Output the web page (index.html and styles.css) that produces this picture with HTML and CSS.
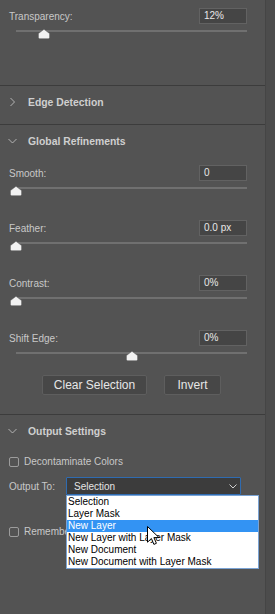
FILE: index.html
```html
<!DOCTYPE html>
<html>
<head>
<meta charset="utf-8">
<link rel="stylesheet" href="styles.css">
</head>
<body>
<div class="app">
  <div class="panel">
    <section class="sec sec-top">
      <div class="field">
        <div class="row"><span class="label">Transparency:</span><span class="box">12%</span></div>
        <div class="slider"><div class="track"></div><svg class="thumb" style="left:12%" width="12" height="10" viewBox="0 0 12 10"><path d="M6 0.3 L11.6 4.6 V8.6 Q11.6 9.7 10.5 9.7 H1.5 Q0.4 9.7 0.4 8.6 V4.6 Z"/></svg></div>
      </div>
    </section>

    <section class="sec sec-collapsed">
      <div class="header">
        <svg class="chev" width="9" height="10" viewBox="0 0 9 10"><polyline points="2.5,1 6.5,5 2.5,9"/></svg>
        <span class="htext">Edge Detection</span>
      </div>
    </section>

    <section class="sec sec-global">
      <div class="header">
        <svg class="chev" width="9" height="10" viewBox="0 0 9 10"><polyline points="0.5,3 4.5,7 8.5,3"/></svg>
        <span class="htext">Global Refinements</span>
      </div>
      <div class="fields">
        <div class="field">
          <div class="row"><span class="label">Smooth:</span><span class="box">0</span></div>
          <div class="slider"><div class="track"></div><svg class="thumb" style="left:0%" width="12" height="10" viewBox="0 0 12 10"><path d="M6 0.3 L11.6 4.6 V8.6 Q11.6 9.7 10.5 9.7 H1.5 Q0.4 9.7 0.4 8.6 V4.6 Z"/></svg></div>
        </div>
        <div class="field">
          <div class="row"><span class="label">Feather:</span><span class="box">0.0 px</span></div>
          <div class="slider"><div class="track"></div><svg class="thumb" style="left:0%" width="12" height="10" viewBox="0 0 12 10"><path d="M6 0.3 L11.6 4.6 V8.6 Q11.6 9.7 10.5 9.7 H1.5 Q0.4 9.7 0.4 8.6 V4.6 Z"/></svg></div>
        </div>
        <div class="field">
          <div class="row"><span class="label">Contrast:</span><span class="box">0%</span></div>
          <div class="slider"><div class="track"></div><svg class="thumb" style="left:0%" width="12" height="10" viewBox="0 0 12 10"><path d="M6 0.3 L11.6 4.6 V8.6 Q11.6 9.7 10.5 9.7 H1.5 Q0.4 9.7 0.4 8.6 V4.6 Z"/></svg></div>
        </div>
        <div class="field">
          <div class="row"><span class="label">Shift Edge:</span><span class="box">0%</span></div>
          <div class="slider"><div class="track"></div><svg class="thumb" style="left:50%" width="12" height="10" viewBox="0 0 12 10"><path d="M6 0.3 L11.6 4.6 V8.6 Q11.6 9.7 10.5 9.7 H1.5 Q0.4 9.7 0.4 8.6 V4.6 Z"/></svg></div>
        </div>
      </div>
      <div class="buttons">
        <button class="btn btn-clear">Clear Selection</button>
        <button class="btn btn-invert">Invert</button>
      </div>
    </section>

    <section class="sec sec-output">
      <div class="header">
        <svg class="chev" width="9" height="10" viewBox="0 0 9 10"><polyline points="0.5,3 4.5,7 8.5,3"/></svg>
        <span class="htext">Output Settings</span>
      </div>
      <div class="check-row check-decon">
        <span class="checkbox"></span><span class="label">Decontaminate Colors</span>
      </div>
      <div class="output-row">
        <span class="label">Output To:</span>
        <div class="select">
          <span class="select-text">Selection</span>
          <svg class="select-chev" width="8" height="5" viewBox="0 0 8 5"><polyline points="0.5,0.5 4,4 7.5,0.5"/></svg>
          <ul class="list">
            <li>Selection</li>
            <li>Layer Mask</li>
            <li class="active">New Layer</li>
            <li>New Layer with Layer Mask</li>
            <li>New Document</li>
            <li>New Document with Layer Mask</li>
            <svg class="cursor" width="13" height="20" viewBox="0 0 13 20"><path d="M0.5 0.5 V16.2 L4.4 12.5 L6.9 18.4 L9.4 17.3 L6.9 11.6 H12 Z"/></svg>
          </ul>
        </div>
      </div>
      <div class="check-row check-remember">
        <span class="checkbox"></span><span class="label">Remember Settings</span>
      </div>
    </section>
  </div>
  <div class="strip"></div>
</div>
</body>
</html>
```

FILE: styles.css
```css
* { box-sizing: border-box; }
html, body { margin: 0; padding: 0; }
body {
  background: #535353;
  font-family: "Liberation Sans", Arial, sans-serif;
  color: #c8c8c8;
  width: 275px;
  height: 614px;
  overflow: hidden;
}
.app { display: flex; height: 614px; }
.panel { width: 265px; background: #535353; }
.strip { width: 10px; background: #4c4c4c; border-left: 1px solid #454545; }

.sec { border-bottom: 1px solid #3c3c3c; }
.sec-top { height: 86px; padding: 8px 18px 0 9px; }
.sec-collapsed { padding-bottom: 6px; }
.sec-global { padding: 0 18px 19px 9px; }
.sec-global .header { margin-left: -9px; }
.sec-output { border-bottom: none; padding: 0 18px 0 9px; }
.sec-output .header { margin-left: -9px; }

.header {
  height: 32px;
  display: flex;
  align-items: center;
  padding-left: 8px;
}
.chev { fill: none; stroke: #b4b4b4; stroke-width: 1; }
.htext {
  margin-left: 11px;
  font-weight: bold;
  font-size: 10.4px;
  color: #cfcfcf;
}

.label { font-size: 10px; color: #c8c8c8; }
.fields { display: flex; flex-direction: column; gap: 10px; margin-top: 8px; }
.field { height: 45px; }
.row { display: flex; justify-content: space-between; align-items: center; height: 16px; }
.box {
  width: 48px;
  height: 16px;
  background: #454545;
  border: 1px solid #626262;
  font-size: 10px;
  color: #e8e8e8;
  line-height: 14px;
  padding-left: 4px;
}
.slider { position: relative; margin: 5px 0 0 7px; height: 11px; padding-top: 1px; }
.track { height: 2px; background: #707070; }
.thumb { position: absolute; top: 0; transform: translateX(-50%); }
.thumb path { fill: #f2f2f2; stroke: #3a3a3a; stroke-width: 0.4; }

.buttons { display: flex; gap: 17px; padding-left: 33px; }
.btn {
  height: 20px;
  padding: 0;
  background: #474747;
  border: 1px solid #5e5e5e;
  border-radius: 2px;
  font-family: "Liberation Sans", Arial, sans-serif;
  font-size: 12px;
  color: #e6e6e6;
}
.btn-clear { width: 105px; }
.btn-invert { width: 57px; }

.check-row { display: flex; align-items: center; gap: 5px; height: 11px; }
.check-decon { margin-top: 9px; }
.check-remember { margin-top: 31px; }
.checkbox {
  width: 10px; height: 10px;
  border: 1px solid #9c9c9c;
  border-radius: 2px;
  flex: none;
}

.output-row { display: flex; align-items: center; margin-top: 10px; height: 18px; }
.output-row .label { width: 57px; }
.select {
  position: relative;
  width: 175px;
  height: 18px;
  background: #3c3c3c;
  border: 1px solid #2f6bb0;
  border-radius: 1px;
  display: flex;
  align-items: center;
  padding-left: 7px;
}
.select-text { font-size: 10px; color: #e4e4e4; flex: 1; }
.select-chev { fill: none; stroke: #cfcfcf; stroke-width: 1; margin-right: 3px; }
.list {
  position: absolute;
  z-index: 5;
  top: 17px;
  left: -1px;
  width: 193px;
  margin: 0;
  padding: 0;
  list-style: none;
  background: #ffffff;
  border: 1px solid #7aa3d4;
}
.list li {
  height: 12px;
  line-height: 12px;
  font-size: 10px;
  color: #000;
  padding-left: 1px;
  white-space: nowrap;
}
.list li.active { background: #3393f3; color: #ffffff; }
.cursor { position: absolute; left: 80px; top: 30px; }
.cursor path { fill: #ffffff; stroke: #000000; stroke-width: 1; }
```
